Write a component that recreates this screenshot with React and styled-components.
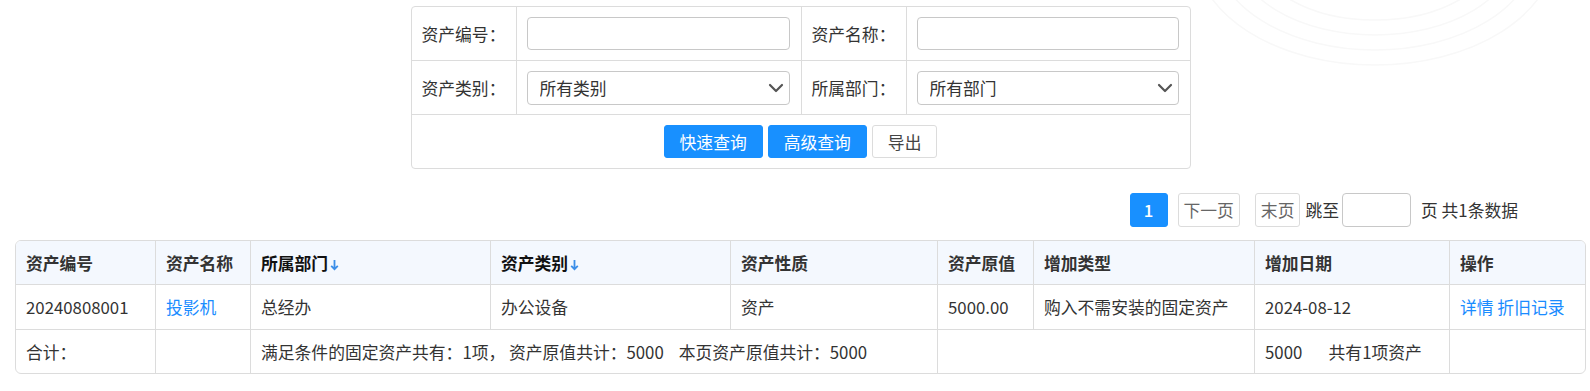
import React from "react";
import styled, { createGlobalStyle } from "styled-components";
import { ChevronDown } from "lucide-react";

const columns = [
  { title: "资产编号", width: 140 },
  { title: "资产名称", width: 95 },
  { title: "所属部门", width: 240, sort: true },
  { title: "资产类别", width: 240, sort: true },
  { title: "资产性质", width: 207 },
  { title: "资产原值", width: 96 },
  { title: "增加类型", width: 221 },
  { title: "增加日期", width: 195 },
  { title: "操作", width: 135 },
];

const SortArrow = () => (
  <svg width="9" height="12" viewBox="0 0 9 12">
    <path d="M4.5 1v9M1.2 6.8l3.3 3.4 3.3-3.4" fill="none" stroke="#3b8ee8" strokeWidth="1.8" />
  </svg>
);

const App = () => {
  return (
    <Page>
      <GlobalStyle />
      <Watermark width="400" height="70" viewBox="0 0 400 70">
        {[0, 1, 2, 3].map((i) => (
          <ellipse key={i} cx="195" cy="-50" rx={180 - i * 20} ry={115 - i * 15} fill="none" stroke="#f8f8f8" strokeWidth="1.5" />
        ))}
      </Watermark>

      <SearchBox>
        <LabelCell>资产编号：</LabelCell>
        <FieldCell>
          <Input type="text" />
        </FieldCell>
        <LabelCell>资产名称：</LabelCell>
        <FieldCell $last>
          <Input type="text" />
        </FieldCell>

        <LabelCell>资产类别：</LabelCell>
        <FieldCell>
          <SelectWrap>
            <Select defaultValue="">
              <option value="">所有类别</option>
            </Select>
            <Chevron size={24} strokeWidth={2.2} />
          </SelectWrap>
        </FieldCell>
        <LabelCell>所属部门：</LabelCell>
        <FieldCell $last>
          <SelectWrap>
            <Select defaultValue="">
              <option value="">所有部门</option>
            </Select>
            <Chevron size={24} strokeWidth={2.2} />
          </SelectWrap>
        </FieldCell>

        <ButtonRow>
          <Button $primary>快速查询</Button>
          <Button $primary>高级查询</Button>
          <Button>导出</Button>
        </ButtonRow>
      </SearchBox>

      <Pager>
        <PageBtn $active>1</PageBtn>
        <PageBtn>下一页</PageBtn>
        <PageBtn style={{ marginLeft: 15 }}>末页</PageBtn>
        <PagerText>跳至</PagerText>
        <JumpInput type="text" />
        <PagerText>页 共1条数据</PagerText>
      </Pager>

      <TableWrap>
        <Table>
          <colgroup>
            {columns.map((c) => (
              <col key={c.title} style={{ width: c.width }} />
            ))}
          </colgroup>
          <thead>
            <tr>
              {columns.map((c) => (
                <Th key={c.title} $sort={c.sort}>
                  {c.title}
                  {c.sort && <SortArrow />}
                </Th>
              ))}
            </tr>
          </thead>
          <tbody>
            <tr>
              <Td>20240808001</Td>
              <Td><Link href="#">投影机</Link></Td>
              <Td>总经办</Td>
              <Td>办公设备</Td>
              <Td>资产</Td>
              <Td>5000.00</Td>
              <Td>购入不需安装的固定资产</Td>
              <Td>2024-08-12</Td>
              <Td $last>
                <Link href="#">详情</Link> <Link href="#">折旧记录</Link>
              </Td>
            </tr>
            <tr>
              <Td $foot>合计：</Td>
              <Td $foot></Td>
              <Td $foot colSpan={3}>
                满足条件的固定资产共有：1项，&nbsp;资产原值共计：5000&nbsp;&nbsp;&nbsp;&nbsp;本页资产原值共计：5000
              </Td>
              <Td $foot colSpan={2}></Td>
              <Td $foot>5000&nbsp;&nbsp;&nbsp;&nbsp;&nbsp;&nbsp;&nbsp;共有1项资产</Td>
              <Td $foot $last></Td>
            </tr>
          </tbody>
        </Table>
      </TableWrap>
    </Page>
  );
};

export default App;

const GlobalStyle = createGlobalStyle`
  body {
    margin: 0;
    background: #fff;
    font-family: "Noto Sans CJK SC", "Noto Sans", sans-serif;
    font-size: 16.8px;
    color: #333;
  }
  * { box-sizing: border-box; }
`;

const Page = styled.div`
  position: relative;
  padding: 6px 0 0 11px;
`;

const Watermark = styled.svg`
  position: absolute;
  top: 0;
  left: 1180px;
  pointer-events: none;
`;

const SearchBox = styled.div`
  width: 780px;
  margin: 0 auto;
  display: grid;
  grid-template-columns: 105px 285px 105px 1fr;
  border: 1px solid #dcdcdc;
  border-radius: 4px;
`;

const LabelCell = styled.div`
  height: 54px;
  display: flex;
  align-items: center;
  padding-left: 10px;
  border-right: 1px solid #dcdcdc;
  border-bottom: 1px solid #dcdcdc;
  color: #333;
`;

const FieldCell = styled.div`
  height: 54px;
  display: flex;
  align-items: center;
  padding: 0 11px 0 10px;
  border-right: ${(p) => (p.$last ? "none" : "1px solid #dcdcdc")};
  border-bottom: 1px solid #dcdcdc;
`;

const Input = styled.input`
  width: 100%;
  height: 33px;
  border: 1px solid #c8c8c8;
  border-radius: 4px;
  padding: 0 10px;
  font: inherit;
  outline: none;
`;

const SelectWrap = styled.div`
  position: relative;
  width: 100%;
`;

const Select = styled.select`
  appearance: none;
  width: 100%;
  height: 34px;
  border: 1px solid #c8c8c8;
  border-radius: 4px;
  padding: 0 30px 0 12px;
  background: #fff;
  font: inherit;
  color: #333;
  outline: none;
`;

const Chevron = styled(ChevronDown)`
  position: absolute;
  right: 2px;
  top: 50%;
  transform: translateY(-50%);
  color: #555;
  pointer-events: none;
`;

const ButtonRow = styled.div`
  grid-column: 1 / -1;
  height: 53px;
  display: flex;
  align-items: center;
  justify-content: center;
  gap: 5px;
`;

const Button = styled.button`
  height: 33px;
  padding: 0 15px;
  border-radius: 3px;
  font-family: inherit;
  font-size: 16.8px;
  cursor: pointer;
  border: 1px solid ${(p) => (p.$primary ? "#1890ff" : "#dcdcdc")};
  background: ${(p) => (p.$primary ? "#1890ff" : "#fff")};
  color: ${(p) => (p.$primary ? "#fff" : "#444")};
`;

const Pager = styled.div`
  display: flex;
  justify-content: flex-end;
  align-items: center;
  margin-top: 24px;
  padding-right: 72px;
  height: 34px;
`;

const PageBtn = styled.button`
  height: 34px;
  min-width: 38px;
  padding: 0 5px;
  margin-right: ${(p) => (p.$active ? "10px" : "0")};
  border-radius: 3px;
  font-family: inherit;
  font-size: 16.8px;
  border: 1px solid ${(p) => (p.$active ? "#1890ff" : "#dcdcdc")};
  background: ${(p) => (p.$active ? "#1890ff" : "#fff")};
  color: ${(p) => (p.$active ? "#fff" : "#666")};
  font-weight: ${(p) => (p.$active ? 500 : 400)};
  cursor: pointer;
`;

const PagerText = styled.span`
  margin-left: 5px;
  color: #333;
`;

const JumpInput = styled.input`
  width: 69px;
  height: 34px;
  margin: 0 5px 0 3px;
  border: 1px solid #c8c8c8;
  border-radius: 4px;
  outline: none;
`;

const TableWrap = styled.div`
  margin: 13px 4px 0 4px;
  border: 1px solid #dcdcdc;
  border-radius: 6px;
  overflow: hidden;
`;

const Table = styled.table`
  width: 100%;
  table-layout: fixed;
  border-collapse: separate;
  border-spacing: 0;
`;

const Th = styled.th`
  height: 44px;
  padding: 0 10px;
  text-align: left;
  font-weight: 700;
  color: ${(p) => (p.$sort ? "#111" : "#333")};
  background: #f4f8fe;
  border-bottom: 1px solid #dcdcdc;
  border-right: 1px solid #dcdcdc;
  white-space: nowrap;

  &:last-child {
    border-right: none;
  }

  svg {
    margin-left: 2px;
    vertical-align: -1px;
  }
`;

const Td = styled.td`
  height: ${(p) => (p.$foot ? "43px" : "45px")};
  padding: 0 10px;
  color: #333;
  white-space: nowrap;
  border-right: ${(p) => (p.$last ? "none" : "1px solid #dcdcdc")};
  border-bottom: ${(p) => (p.$foot ? "none" : "1px solid #dcdcdc")};
`;

const Link = styled.a`
  color: #1a8cff;
  text-decoration: none;
`;
